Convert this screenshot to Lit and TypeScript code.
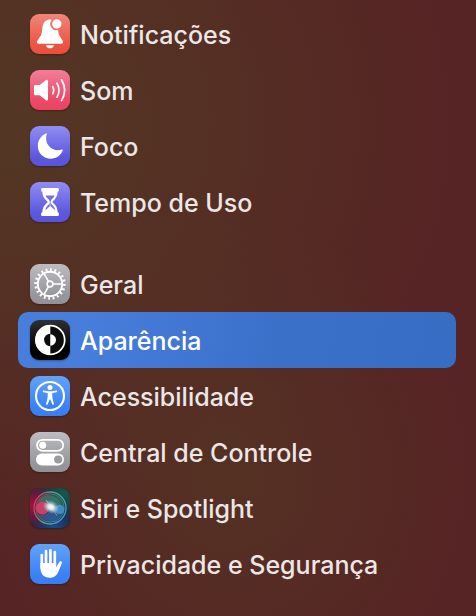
import { LitElement, html, svg, css, nothing } from "lit";
import { customElement, property } from "lit/decorators.js";
import { classMap } from "lit/directives/class-map.js";

const glyphs: Record<string, unknown> = {
  bell: svg`
    <path fill="#fff" d="M20.6 5.2C15.6 5.4 12.8 8.8 12.4 14c-.3 4.300-.6 6.400-2.400 8.700L7.500 26.600c-1.300 1.800-.5 3.200 1.300 3.200h22.400c1.800 0 2.600-1.400 1.300-3.200L30.300 23c-1.500-2.200-2-4.400-2.200-7a6.200 6.200 0 0 1-6.600-9.700z"/>
    <circle cx="26.800" cy="10" r="4.700" fill="#fff"/>
    <path fill="#fff" d="M16 31.200h8c-.4 2-2 3.100-4 3.100s-3.600-1.100-4-3.100z"/>`,
  sound: svg`
    <path fill="#fff" d="M5.500 15h4.300l6-4.800c1.100-.9 2.200-.4 2.200 1v18c0 1.400-1.100 1.900-2.200 1l-6-4.900H5.500c-1 0-1.500-.6-1.500-1.500v-7.300c0-.9.5-1.500 1.500-1.500z"/>
    <g fill="none" stroke="#fff" stroke-width="1.700" stroke-linecap="round">
      <path d="M22.800 16.600c1.200 2.200 1.200 5 0 7.200"/>
      <path d="M27 13.200c2.500 4.300 2.500 9.700 0 14"/>
      <path d="M31.500 9.800c4 6.500 4 14.300 0 20.800"/>
    </g>`,
  moon: svg`<path fill="#fff" d="M15.800 7.400c.7-.3 1.200.2.9.9-1.100 3.200-.9 7.700 2 11.400 3.100 4 8.100 5.300 12.900 3.900.9-.3 1.400.2 1.100 1-1.900 5-6.600 8.200-12 8.200C13.500 32.800 7.800 27 7.800 20c0-5.600 3.200-10.600 8-12.600z"/>`,
  hourglass: svg`
    <path fill="#fff" d="M12.500 6h15c.9 0 1.400.6 1.400 1.300v1c0 .8-.5 1.400-1.200 1.500-.2 4.200-1.900 7-4.600 9.200-.8.700-.8 1.400 0 2.100 2.800 2.200 4.400 5 4.600 9.100.8.100 1.200.7 1.200 1.500v1c0 .8-.5 1.300-1.400 1.300h-15c-.9 0-1.400-.5-1.400-1.300v-1c0-.8.5-1.400 1.200-1.500.2-4.100 1.900-6.900 4.600-9.100.8-.7.8-1.400 0-2.100-2.800-2.200-4.400-5-4.600-9.200-.7-.1-1.200-.7-1.200-1.500v-1c0-.7.5-1.300 1.400-1.300z"/>
    <path fill="#746fe2" d="M15.500 13.500h9.100c-.8 1.700-1.700 2.800-3 3.900-1.100.9-1.100 4.200.2 5.200 1.900 1.600 3 3.300 3.400 5.700l-4.300-3.700c-.4-.4-.8-.4-1.200 0l-4.300 3.700c.4-2.400 1.400-4.100 3.300-5.700 1.300-1 1.200-4.300.1-5.200-1.300-1.100-2.500-2.200-3.300-3.900z"/>
    <path stroke="#fff" stroke-opacity=".6" stroke-width="1" d="M20 19v6"/>`,
  gear: svg`
    <g fill="none" stroke="#fff">
      <circle cx="20" cy="20" r="14.300" stroke-width="2.800" pathLength="40" stroke-dasharray=".8 1.200"/>
      <circle cx="20" cy="20" r="12.200" stroke-width="1.900"/>
      <circle cx="20" cy="20" r="2.900" stroke-width="1.600"/>
      <path stroke-width="1.600" d="M23 20h9.500M18.500 17.400l-4.700-8.200M18.500 22.600l-4.700 8.200"/>
    </g>`,
  contrast: svg`
    <circle cx="20.300" cy="20" r="14.400" fill="#0c0c0c" stroke="#fff" stroke-width="1.700"/>
    <path fill="#fff" d="M20.300 5a15 15 0 0 0 0 30z"/>
    <path fill="#0c0c0c" d="M20.300 13.800a6.200 6.200 0 0 0 0 12.400z"/>
    <path fill="#fff" d="M20.300 14.300a5.700 5.700 0 0 1 0 11.400z"/>`,
  person: svg`
    <circle cx="20" cy="20" r="14" fill="none" stroke="#fff" stroke-width="2.100"/>
    <circle cx="20" cy="11.600" r="2.500" fill="#fff"/>
    <path fill="#fff" d="M13.700 14.600l4.300.6h4l4.300-.6c1.100-.1 1.300 1.300.2 1.600l-3.800.9c-.4.100-.5.400-.5.800 0 3.200.6 6.400 1.700 9.700.4 1.200-1.100 1.700-1.600.6L20.300 23.500c-.2-.3-.4-.3-.6 0l-2 4.700c-.5 1.100-2 .6-1.600-.6 1.100-3.300 1.700-6.500 1.700-9.700 0-.4-.1-.7-.5-.8l-3.800-.9c-1.100-.3-.9-1.700.2-1.600z"/>`,
  switches: svg`
    <rect x="7" y="7.800" width="26.200" height="11" rx="5.500" fill="none" stroke="#fff" stroke-width="1.800"/>
    <circle cx="12.700" cy="13.300" r="3.500" fill="#fff"/>
    <rect x="6" y="21.600" width="28" height="11.800" rx="5.900" fill="#fff"/>
    <circle cx="28.200" cy="27.500" r="4.100" fill="#9b9a9f"/>`,
  siri: svg`
    <defs>
      <radialGradient id="crimson" cx="0" cy=".42" r=".65"><stop stop-color="#a50f3d"/><stop offset="1" stop-color="#a50f3d" stop-opacity="0"/></radialGradient>
      <radialGradient id="teal" cx=".85" cy=".15" r=".7"><stop stop-color="#17584c"/><stop offset="1" stop-color="#17584c" stop-opacity="0"/></radialGradient>
      <radialGradient id="navy" cx=".6" cy="1" r=".55"><stop stop-color="#174b92"/><stop offset="1" stop-color="#174b92" stop-opacity="0"/></radialGradient>
      <radialGradient id="glow"><stop stop-color="#fff"/><stop offset=".35" stop-color="#eefaf9" stop-opacity=".9"/><stop offset="1" stop-color="#a7d7dc" stop-opacity="0"/></radialGradient>
      <linearGradient id="rim" x1="0" y1=".3" x2="1" y2=".7"><stop stop-color="#cf3a62"/><stop offset=".45" stop-color="#60a085"/><stop offset="1" stop-color="#4299c8"/></linearGradient>
    </defs>
    <rect width="40" height="40" rx="9" fill="#202638"/>
    <rect width="40" height="40" rx="9" fill="url(#crimson)"/>
    <rect width="40" height="40" rx="9" fill="url(#teal)"/>
    <rect width="40" height="40" rx="9" fill="url(#navy)"/>
    <circle cx="20" cy="20" r="14.500" fill="#5aa5a0" fill-opacity=".2"/>
    <path fill="#4d9c80" fill-opacity=".4" d="M8 14c3-6 9-8 15-6s9 7 8 12c-6-5-12-7-23-6z"/>
    <path fill="#3865bb" fill-opacity=".4" d="M9 27c5 1 10-1 13-6 2 3 4 6 9 6-5 8-16 8-22 0z"/>
    <circle cx="12.500" cy="20" r="6.500" fill="#df4570" fill-opacity=".8"/>
    <circle cx="29.500" cy="21.500" r="4.800" fill="#4a9de3" fill-opacity=".75"/>
    <circle cx="20" cy="20" r="16" fill="none" stroke="url(#rim)" stroke-width="1.300"/>
    <circle cx="20" cy="20" r="14.200" fill="none" stroke="url(#rim)" stroke-width=".7" stroke-opacity=".8"/>
    <ellipse cx="21" cy="19" rx="8.500" ry="6.500" fill="url(#glow)" transform="rotate(25 21 19)"/>
    <path stroke="#fff" stroke-opacity=".5" stroke-width=".8" d="M16 12L21 19l6 8.500"/>`,
  hand: svg`
    <g fill="none" stroke="#fff" stroke-width="2.700" stroke-linecap="round">
      <path d="M11.800 11v13M16 7.200V22M20.400 6.300V22M24.800 8.200V22"/>
    </g>
    <path fill="#fff" d="M10.450 19h15.700v4.400l3-5.300c1-1.700 3.400-.9 2.700 1L28.700 27c-1.600 4.400-4.500 6.800-8.900 6.800-5.800 0-9.350-3.800-9.350-9.800z"/>`,
};

interface Item {
  label: string;
  glyph: string;
  tint: string;
  current?: boolean;
}

const groups: Item[][] = [
  [
    { label: "Notificações", glyph: "bell", tint: "red" },
    { label: "Som", glyph: "sound", tint: "pink" },
    { label: "Foco", glyph: "moon", tint: "indigo" },
    { label: "Tempo de Uso", glyph: "hourglass", tint: "indigo" },
  ],
  [
    { label: "Geral", glyph: "gear", tint: "gray" },
    { label: "Aparência", glyph: "contrast", tint: "black", current: true },
    { label: "Acessibilidade", glyph: "person", tint: "blue" },
    { label: "Central de Controle", glyph: "switches", tint: "gray" },
    { label: "Siri e Spotlight", glyph: "siri", tint: "dark" },
    { label: "Privacidade e Segurança", glyph: "hand", tint: "blue" },
  ],
];

@customElement("settings-icon")
export class SettingsIcon extends LitElement {
  @property() glyph = "";
  @property() tint = "";

  static styles = css`
    :host { display: block; flex: none; }
    .tile {
      width: 40px;
      height: 40px;
      border-radius: 9px;
      box-shadow: 0 1px 2px rgba(0, 0, 0, 0.3);
    }
    .tile svg { display: block; width: 100%; height: 100%; }
    .red { background: linear-gradient(#f1857a, #ec5545 75%, #ea4e3d); }
    .pink { background: linear-gradient(#f17e98, #ed4968 75%, #eb4262); }
    .indigo { background: linear-gradient(#918df3, #5d59de 75%, #5854db); }
    .gray { background: linear-gradient(#bdbcc1, #98979c 75%, #929196); }
    .blue { background: linear-gradient(#62a3f8, #3b82f7 75%, #377ef6); }
    .black { background: linear-gradient(#303030, #000 75%); }
    .dark { background: #202638; }
  `;

  render() {
    return html`<div class=${classMap({ tile: true, [this.tint]: true })}>
      <svg viewBox="0 0 40 40" aria-hidden="true">${glyphs[this.glyph]}</svg>
    </div>`;
  }
}

@customElement("app-root")
export class AppRoot extends LitElement {
  static styles = css`
    :host {
      display: block;
      min-height: 100vh;
      box-sizing: border-box;
      padding: 6px 20px 24px 18px;
      font-family: Inter, "Liberation Sans", sans-serif;
      background:
        radial-gradient(ellipse 95% 66% at 0% 20%, #533723 0%, rgba(84, 50, 36, 0.9) 40%, rgba(86, 37, 36, 0) 100%),
        radial-gradient(ellipse 50% 42% at 48% 77%, #543123 0%, rgba(85, 46, 36, 0.7) 50%, rgba(86, 37, 36, 0) 100%),
        #562424;
    }
    .sidebar { display: flex; flex-direction: column; gap: 26px; }
    .group { list-style: none; margin: 0; padding: 0; }
    .row {
      display: flex;
      align-items: center;
      gap: 10px;
      height: 56px;
      box-sizing: border-box;
      padding: 0 12px;
      border-radius: 10px;
      color: #ece7e6;
      font-size: 25px;
      font-weight: 500;
      line-height: 32px;
      text-decoration: none;
      white-space: nowrap;
    }
    .label { padding-top: 2px; }
    .current {
      color: #fff;
      background: linear-gradient(100deg, #477edb 15%, #3b70c9 60%, #386dc4);
    }
  `;

  render() {
    return html`<nav class="sidebar" aria-label="Ajustes">
      ${groups.map(
        (group) => html`<ul class="group">
          ${group.map(
            (item) => html`<li>
              <a
                class=${classMap({ row: true, current: !!item.current })}
                href="#${item.glyph}"
                aria-current=${item.current ? "page" : nothing}
              >
                <settings-icon glyph=${item.glyph} tint=${item.tint}></settings-icon>
                <span class="label">${item.label}</span>
              </a>
            </li>`
          )}
        </ul>`
      )}
    </nav>`;
  }
}
